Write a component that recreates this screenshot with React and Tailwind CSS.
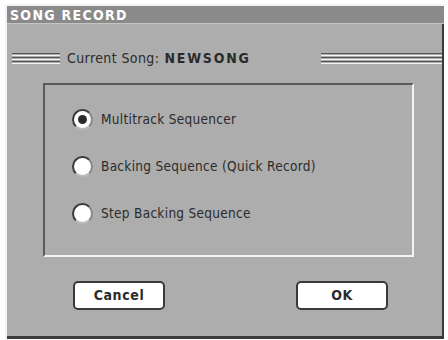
import React from "react";

const font = { fontFamily: '"DejaVu Sans Condensed", "DejaVu Sans", sans-serif' };

function Rule({ className }) {
  return (
    <div className={`flex flex-col gap-[1px] ${className}`}>
      <div className="h-[1px] bg-[#555]" />
      <div className="h-[1px] bg-[#f4f4f4]" />
      <div className="h-[1px] bg-[#555]" />
      <div className="h-[1px] bg-[#f4f4f4]" />
      <div className="h-[1px] bg-[#555]" />
      <div className="h-[1px] bg-[#f4f4f4]" />
    </div>
  );
}

function Radio({ checked, label }) {
  return (
    <div className="flex items-center gap-[8px]">
      <div className="w-[21px] h-[21px] rounded-full bg-white border-2 border-[#3a3a3a] border-r-[#888] border-b-[#bbb] flex items-center justify-center">
        {checked && <div className="w-[9px] h-[9px] rounded-full bg-[#2a2a2a]" />}
      </div>
      <span className="text-[13.5px] text-[#2b2b2b] tracking-[0.3px]">{label}</span>
    </div>
  );
}

function Button({ children }) {
  return (
    <button className="w-[92px] h-[29px] rounded-[5px] bg-white border-2 border-[#3a3a3a] text-[14px] font-bold text-[#2b2b2b] tracking-[0.6px] flex items-center justify-center">
      {children}
    </button>
  );
}

export default function App() {
  return (
    <div className="w-[448px] h-[340px] bg-white pt-[4px] pl-[5px]" style={font}>
      <div className="w-[439px] h-[335px] bg-[#adadad] border-l-2 border-t-2 border-[#f2f2f2] flex flex-col">
        <div className="h-[18px] bg-[#8a8a8a] border-b border-[#c4c4c4] flex items-center pl-[3px]">
          <span className="text-[14px] font-bold text-white tracking-[1.3px] leading-none">SONG RECORD</span>
        </div>
        <div className="flex-1 border-r-2 border-b-[3px] border-[#3a3a3a] flex flex-col">
          <div className="flex items-center mt-[26px] h-[16px]">
            <Rule className="w-[48px] ml-[5px]" />
            <span className="ml-[7px] text-[14px] text-[#2b2b2b] tracking-[0.4px]">Current Song:</span>
            <span className="ml-[5px] text-[14px] font-bold text-[#2b2b2b] tracking-[1.8px]">NEWSONG</span>
            <div className="flex-1" />
            <Rule className="w-[121px]" />
          </div>
          <div className="ml-[36px] mt-[17px] w-[371px] h-[174px] border-l-2 border-t-2 border-[#5a5a5a] border-r-2 border-r-[#f4f4f4] border-b-2 border-b-[#f4f4f4] flex flex-col gap-[26px] pl-[27px] pt-[24px]">
            <Radio checked label="Multitrack Sequencer" />
            <Radio label="Backing Sequence (Quick Record)" />
            <Radio label="Step Backing Sequence" />
          </div>
          <div className="flex mt-[24px] pl-[66px] gap-[131px]">
            <Button>Cancel</Button>
            <Button>OK</Button>
          </div>
        </div>
      </div>
    </div>
  );
}
